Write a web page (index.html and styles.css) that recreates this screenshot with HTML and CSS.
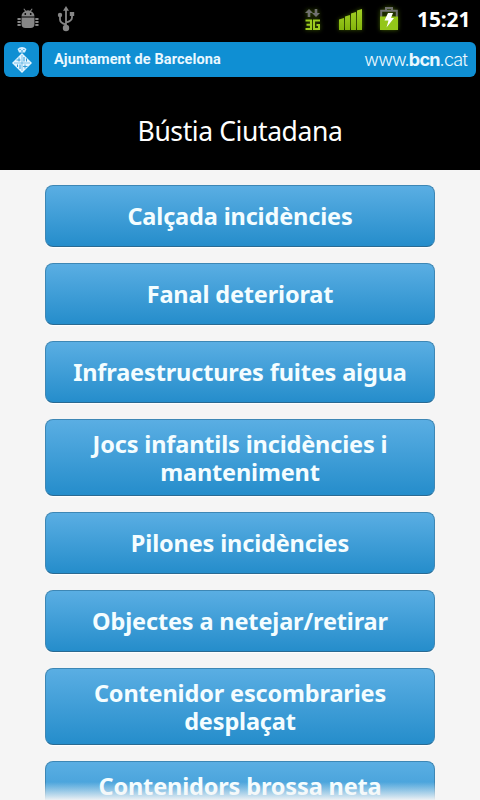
FILE: index.html
```html
<!DOCTYPE html>
<html lang="ca">
<head>
  <meta charset="UTF-8" />
  <meta name="viewport" content="width=device-width, initial-scale=1.0" />
  <title>Bústia Ciutadana</title>
  <link rel="stylesheet" href="styles.css">
</head>
<body>
  <div class="status-bar">
    <div class="status-left">
      <svg class="icon-debug" width="22" height="22" viewBox="0 0 22 22" fill="#868686">
        <path d="M4.500 8.500C4.500 5.500 6.500 3.800 8 3.200L6.400 1l.8-.6L9 2.700a6 6 0 0 1 4 0L14.800.4l.8.6L14 3.200c1.500.6 3.500 2.300 3.500 5.300z"/>
        <path d="M4.500 9.500h13V16q0 4-4 4h-5q-4 0-4-4z"/>
        <path d="M3.700 11H.5M3.700 14H.5M3.700 17H.5M18.300 11h3.200M18.300 14h3.200M18.300 17h3.200" fill="none" stroke="#868686" stroke-width="1.800"/>
        <circle cx="8.300" cy="6" r=".9" fill="#000"/>
        <circle cx="13.700" cy="6" r=".9" fill="#000"/>
      </svg>
      <svg class="icon-usb" width="18" height="26" viewBox="0 0 18 26">
        <path d="M9 3v19M9 18.500q-6-1.500-6-5V9.500M9 16.500q6-1.500 6-5V8" fill="none" stroke="#868686" stroke-width="1.800"/>
        <path d="M9 0l3 4.800H6z" fill="#868686"/>
        <circle cx="9" cy="22" r="3.200" fill="#868686"/>
        <circle cx="3" cy="9" r="2.200" fill="#868686"/>
        <path d="M12.800 6h4.400v4h-4.400z" fill="#868686"/>
      </svg>
    </div>
    <div class="status-right">
      <svg class="icon-3g" width="16" height="23" viewBox="0 0 16 23">
        <path d="M4 0l4 4H5.300v4H2.700V4H0zM9.700 0h2.600v4H15l-4 4-4-4h2.700z" fill="#707070"/>
        <path d="M.5 11.600H6v8.500H.5M1.500 15.800H6M15 11.600H9v8.500h5v-4.200h-2.500" fill="none" stroke="#9bcb1f" stroke-width="2"/>
      </svg>
      <svg class="icon-signal" width="24" height="23" viewBox="0 0 24 23" fill="url(#green)">
        <defs>
          <linearGradient id="green" x1="0" y1="0" x2="0" y2="1">
            <stop offset="0" stop-color="#a3d126"/>
            <stop offset="1" stop-color="#83b40c"/>
          </linearGradient>
        </defs>
        <path d="M0 10.500l5-1.500v12H0zM6 7.500L11 6v15H6zM12 4.500L17 3v18h-5zM18 1.500L23 0v21h-5z"/>
      </svg>
      <svg class="icon-battery" width="18" height="24" viewBox="0 0 18 24">
        <path d="M6 3V1h6v2M1.200 10V3.700h15.600V10" fill="none" stroke="#707070" stroke-width="2"/>
        <path d="M0 9.500h18V23H0z" fill="#94c619"/>
        <path d="M8 6h5l-2 5h3l-7.500 9.500 2-7H4.500z" fill="#fff"/>
      </svg>
      <span class="clock">15:21</span>
    </div>
  </div>

  <header class="banner">
    <div class="shield">
      <svg width="24" height="28" viewBox="0 0 24 28">
        <path d="M12 7l10 10-10 10L2 17z" fill="#e4f5ff"/>
        <path d="M14 11v4.500M16.500 12.500v3M7.500 18.500v2.500M10 18.500v4.500" stroke="#178fd1" stroke-width=".9"/>
        <path d="M9 11.500v4M6.500 14h4M15 18.500v4M13 20.500h4.500" stroke="#178fd1" stroke-width=".8"/>
        <path d="M12 9v16M4 17h16" stroke="#178fd1" stroke-width=".5"/>
        <path d="M9 6.500L7.500 3Q9.500 1 12 1t4.500 2L15 6.500z" fill="#d5efff"/>
        <path d="M9.500 3.500h1.200M13.300 3.500h1.200M11 5h2" stroke="#178fd1" stroke-width=".9"/>
      </svg>
    </div>
    <div class="banner-bar">
      <span class="council">Ajuntament de Barcelona</span>
      <span class="web">www.<b>bcn</b>.cat</span>
    </div>
  </header>

  <h1 class="page-title">Bústia Ciutadana</h1>

  <main class="list">
    <button class="item">Calçada incidències</button>
    <button class="item">Fanal deteriorat</button>
    <button class="item">Infraestructures fuites aigua</button>
    <button class="item tall">Jocs infantils incidències i manteniment</button>
    <button class="item">Pilones incidències</button>
    <button class="item">Objectes a netejar/retirar</button>
    <button class="item tall">Contenidor escombraries desplaçat</button>
    <button class="item tall last">Contenidors brossa neta</button>
  </main>
  <div class="fade"></div>
</body>
</html>
```
FILE: styles.css
```css
body {
  margin: 0;
  height: 800px;
  display: flex;
  flex-direction: column;
  overflow: hidden;
  background: #f5f5f5;
  font-family: "Noto Sans", "Open Sans", sans-serif;
}

.status-bar {
  height: 38px;
  flex: none;
  display: flex;
  justify-content: space-between;
  background: #000;
}

.status-left,
.status-right {
  display: flex;
  align-items: flex-start;
}

.icon-debug {
  margin: 8px 0 0 17px;
}

.icon-usb {
  margin: 6px 0 0 18px;
}

.icon-3g {
  margin: 9px 18px 0 0;
}

.icon-signal {
  margin: 9px 17px 0 0;
}

.icon-battery {
  margin: 7px 19px 0 0;
}

.icon-3g,
.icon-signal,
.icon-battery {
  overflow: visible;
  filter: drop-shadow(0 0 2px rgba(130, 190, 0, 0.5));
}

.clock {
  width: 63px;
  margin-top: 4px;
  color: #fff;
  font-size: 21px;
  font-weight: bold;
  letter-spacing: -0.1px;
  line-height: 30px;
}

.banner {
  flex: none;
  display: flex;
  gap: 3px;
  padding: 4px 4px 0;
  background: #000;
}

.shield,
.banner-bar {
  height: 35px;
  border-radius: 6px;
  background: #0f8fd3;
}

.shield {
  width: 35px;
  display: flex;
  align-items: center;
  justify-content: center;
}

.banner-bar {
  flex: 1;
  display: flex;
  align-items: center;
  justify-content: space-between;
  padding: 0 9px 0 12px;
  color: #e9f8ff;
  white-space: nowrap;
}

.council {
  font-family: Roboto, sans-serif;
  font-size: 14.5px;
  font-weight: bold;
  letter-spacing: 0.1px;
}

.web {
  font-family: Inter, "Liberation Sans", sans-serif;
  font-size: 18px;
  font-weight: 300;
  letter-spacing: -0.8px;
}

.web b {
  font-weight: 700;
}

.page-title {
  flex: none;
  height: 93px;
  margin: 0;
  padding-top: 17px;
  box-sizing: border-box;
  background: #000;
  color: #fff;
  font-size: 26.5px;
  font-weight: normal;
  letter-spacing: -0.4px;
  line-height: 74px;
  text-align: center;
}

.list {
  display: flex;
  flex-direction: column;
  gap: 16px;
  padding: 15px 45px 0;
}

.item {
  flex: none;
  height: 62px;
  padding: 0 24px;
  border: 1px solid #3d87b5;
  border-bottom-color: #2a6a92;
  border-radius: 8px;
  background: linear-gradient(#5aaee3, #258dcb);
  box-shadow: 0 1px 1px #fff;
  color: #f4fdff;
  font-family: inherit;
  font-size: 23.5px;
  font-weight: bold;
  letter-spacing: -0.15px;
  line-height: 28px;
}

/* two-line buttons */
.item.tall {
  height: 77px;
}

.item.last {
  padding-bottom: 27px;
}

.fade {
  position: absolute;
  left: 0;
  right: 0;
  top: 782px;
  height: 18px;
  background: linear-gradient(rgba(245, 245, 245, 0), rgba(245, 245, 245, 0.95));
}
```
